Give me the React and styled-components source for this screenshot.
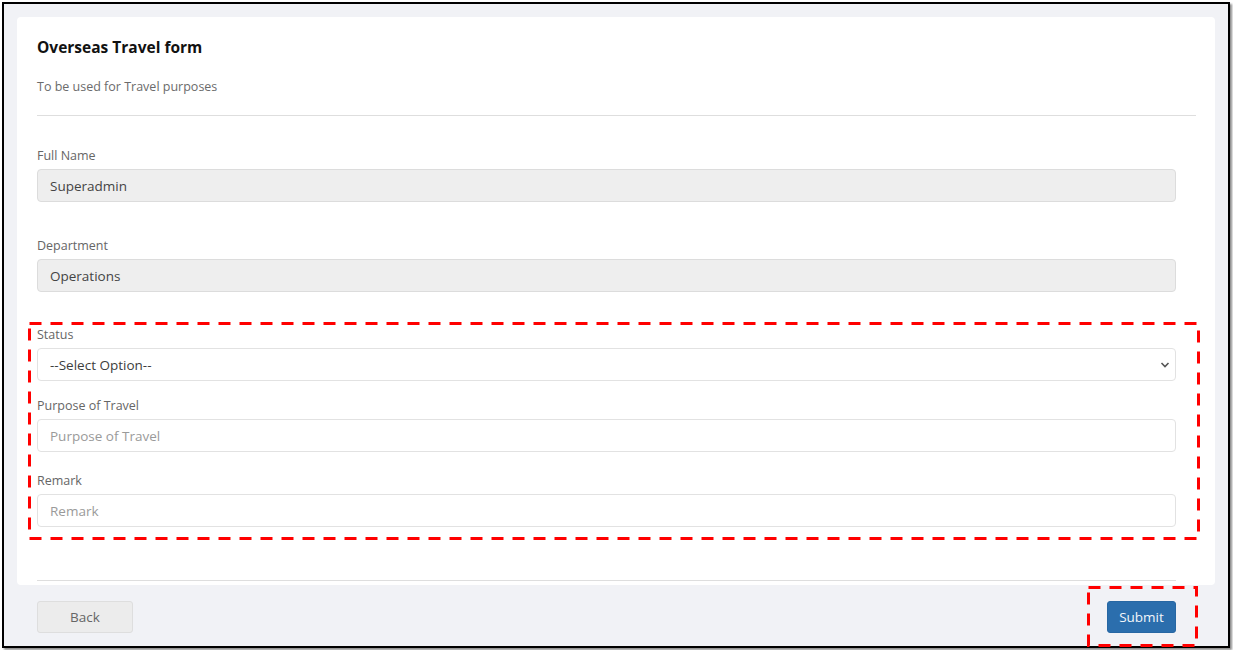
import React from "react";
import styled, { createGlobalStyle } from "styled-components";

const Global = createGlobalStyle`
  html, body { margin: 0; padding: 0; background: #ffffff; }
  body { font-family: "Open Sans", "Noto Sans", sans-serif; }
  * { box-sizing: border-box; }
`;

const Page = styled.div`
  width: 1233px;
  height: 650px;
  padding: 2px 5px 4px 2px;
`;

const Frame = styled.div`
  width: 1228px;
  height: 646px;
  border: 2px solid #000;
  background: #f1f2f6;
  box-shadow: 2px 2px 2px rgba(0, 0, 0, 0.45);
  padding: 13px 13px 0 13px;
  display: flex;
  flex-direction: column;
`;

const Card = styled.div`
  background: #fff;
  border-radius: 4px;
  height: 568px;
  padding: 20px 19px 0 20px;
  display: flex;
  flex-direction: column;
`;

const Title = styled.h1`
  margin: 0 0 21px;
  font-size: 15.5px;
  line-height: 20px;
  font-weight: 700;
  color: #111;
`;

const Subtitle = styled.p`
  margin: 0;
  font-size: 12.5px;
  line-height: 18px;
  color: #6b6b6b;
`;

const Rule = styled.hr`
  margin: ${(p) => p.$m || "0"};
  border: 0;
  border-top: 1px solid #dedede;
  height: 0;
  width: ${(p) => p.$w || "100%"};
`;

const Fields = styled.div`
  padding-right: 20px;
  display: flex;
  flex-direction: column;
  margin-top: 31px;
`;

const Field = styled.div`
  display: flex;
  flex-direction: column;
  margin-bottom: ${(p) => p.$mb || "0"}px;
`;

const Label = styled.label`
  font-size: 12.5px;
  line-height: 18px;
  color: #666;
  margin-bottom: 4px;
`;

const Input = styled.input`
  height: 33px;
  width: 100%;
  border: 1px solid ${(p) => (p.disabled ? "#dcdcdc" : "#e2e2e2")};
  border-radius: 4px;
  background: ${(p) => (p.disabled ? "#eeeeee" : "#fff")};
  padding: 0 12px;
  font-family: inherit;
  font-size: 13.5px;
  color: #444;
  outline: none;
  &::placeholder { color: #9a9a9a; }
`;

const SelectWrap = styled.div`
  position: relative;
`;

const Select = styled.select`
  appearance: none;
  -webkit-appearance: none;
  height: 33px;
  width: 100%;
  border: 1px solid #e2e2e2;
  border-radius: 4px;
  background: #fff;
  padding: 0 12px;
  font-family: inherit;
  font-size: 13.5px;
  color: #3d3d3d;
  outline: none;
`;

const Chevron = styled.svg`
  position: absolute;
  right: 4px;
  top: 13px;
  pointer-events: none;
`;

const Highlight = styled.div`
  position: relative;
  margin-top: 34px;
`;

const DashBox = styled.svg`
  position: absolute;
  left: ${(p) => p.$l}px;
  top: ${(p) => p.$t}px;
  width: ${(p) => p.$w}px;
  height: ${(p) => p.$h}px;
  pointer-events: none;
  overflow: visible;
`;

const Footer = styled.div`
  display: flex;
  justify-content: space-between;
  align-items: center;
  padding: 16px 39px 0 20px;
`;

const Button = styled.button`
  height: 32px;
  border-radius: 3px;
  font-family: inherit;
  font-size: 13.5px;
  border: 1px solid ${(p) => (p.$primary ? "#2767a3" : "#dedede")};
  background: ${(p) => (p.$primary ? "#2b6ead" : "#ececec")};
  color: ${(p) => (p.$primary ? "#f3f6fa" : "#666")};
  width: ${(p) => p.$w}px;
  padding: 0;
`;

const SubmitWrap = styled.div`
  position: relative;
  display: flex;
`;

function Dashed({ l, t, w, h }) {
  return (
    <DashBox $l={l} $t={t} $w={w} $h={h} viewBox={`0 0 ${w} ${h}`}>
      <rect
        x="1.5"
        y="1.5"
        width={w - 3}
        height={h - 3}
        fill="none"
        stroke="#ff0000"
        strokeWidth="3"
        strokeDasharray="12 9"
      />
    </DashBox>
  );
}

export default function App() {
  return (
    <>
      <Global />
      <Page>
        <Frame>
          <Card>
            <Title>Overseas Travel form</Title>
            <Subtitle>To be used for Travel purposes</Subtitle>
            <Rule $m="19px 0 0" />
            <Fields>
              <Field $mb={35}>
                <Label>Full Name</Label>
                <Input disabled value="Superadmin" readOnly />
              </Field>
              <Field>
                <Label>Department</Label>
                <Input disabled value="Operations" readOnly />
              </Field>
              <Highlight>
                <Dashed l={-9} t={-4} w={1172} h={218} />
                <Field $mb={16}>
                  <Label>Status</Label>
                  <SelectWrap>
                    <Select defaultValue="">
                      <option value="">--Select Option--</option>
                    </Select>
                    <Chevron width="14" height="8" viewBox="0 0 14 8">
                      <path d="M3.5 2 L7 5.5 L10.5 2" fill="none" stroke="#555" strokeWidth="1.6" />
                    </Chevron>
                  </SelectWrap>
                </Field>
                <Field $mb={20}>
                  <Label>Purpose of Travel</Label>
                  <Input placeholder="Purpose of Travel" />
                </Field>
                <Field>
                  <Label>Remark</Label>
                  <Input placeholder="Remark" />
                </Field>
              </Highlight>
            </Fields>
            <Rule $m="53px 0 0" $w="1139px" />
          </Card>
          <Footer>
            <Button $w={96}>Back</Button>
            <SubmitWrap>
              <Dashed l={-20} t={-15} w={111} h={61} />
              <Button $primary $w={69}>Submit</Button>
            </SubmitWrap>
          </Footer>
        </Frame>
      </Page>
    </>
  );
}
